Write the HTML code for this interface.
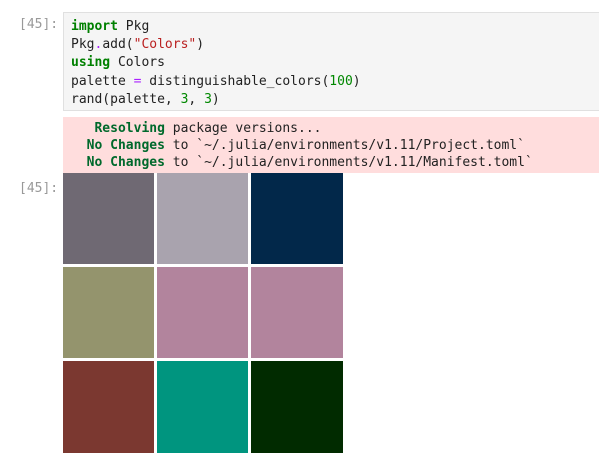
<!DOCTYPE html><html><head><style>
body{margin:0;background:#fff;width:599px;height:475px;overflow:hidden;font-family:"DejaVu Sans Mono","Liberation Mono",monospace;font-size:13px;position:relative}
.p{position:absolute;color:#999;left:19px}
.code{position:absolute;left:63px;top:12px;width:540px;height:99px;background:#f5f5f5;border:1px solid #e0e0e0;box-sizing:border-box;padding:5px 0 0 7px;line-height:18.2px;white-space:pre;color:#222}
.k{color:#008000;font-weight:bold}.s{color:#ba2121}.o{color:#aa22ff}.n{color:#080}
.out{position:absolute;left:63px;top:117px;width:540px;height:56px;background:#fdd;padding:3px 0 0 8px;box-sizing:border-box;line-height:17px;white-space:pre;color:#222}
.g{color:#00692c;font-weight:bold}
.sq{position:absolute;width:91px;height:91px}
</style></head><body>
<div class="p" style="top:17px">[45]:</div>
<div class="code"><span class="k">import</span> Pkg
Pkg<span class="o">.</span>add(<span class="s">"Colors"</span>)
<span class="k">using</span> Colors
palette <span class="o">=</span> distinguishable_colors(<span class="n">100</span>)
rand(palette, <span class="n">3</span>, <span class="n">3</span>)</div>
<div class="out">   <span class="g">Resolving</span> package versions...
  <span class="g">No Changes</span> to `~/.julia/environments/v1.11/Project.toml`
  <span class="g">No Changes</span> to `~/.julia/environments/v1.11/Manifest.toml`</div>
<div class="p" style="top:181px">[45]:</div>
<div class="sq" style="left:63px;top:173px;background:#6f6973"></div>
<div class="sq" style="left:157px;top:173px;background:#a9a3ae"></div>
<div class="sq" style="left:251px;top:173px;width:92px;background:#02284a"></div>
<div class="sq" style="left:63px;top:267px;background:#94946d"></div>
<div class="sq" style="left:157px;top:267px;background:#b2849d"></div>
<div class="sq" style="left:251px;top:267px;width:92px;background:#b2849d"></div>
<div class="sq" style="left:63px;top:361px;height:92px;background:#7b3830"></div>
<div class="sq" style="left:157px;top:361px;height:92px;background:#00957f"></div>
<div class="sq" style="left:251px;top:361px;width:92px;height:92px;background:#012b00"></div>
</body></html>
